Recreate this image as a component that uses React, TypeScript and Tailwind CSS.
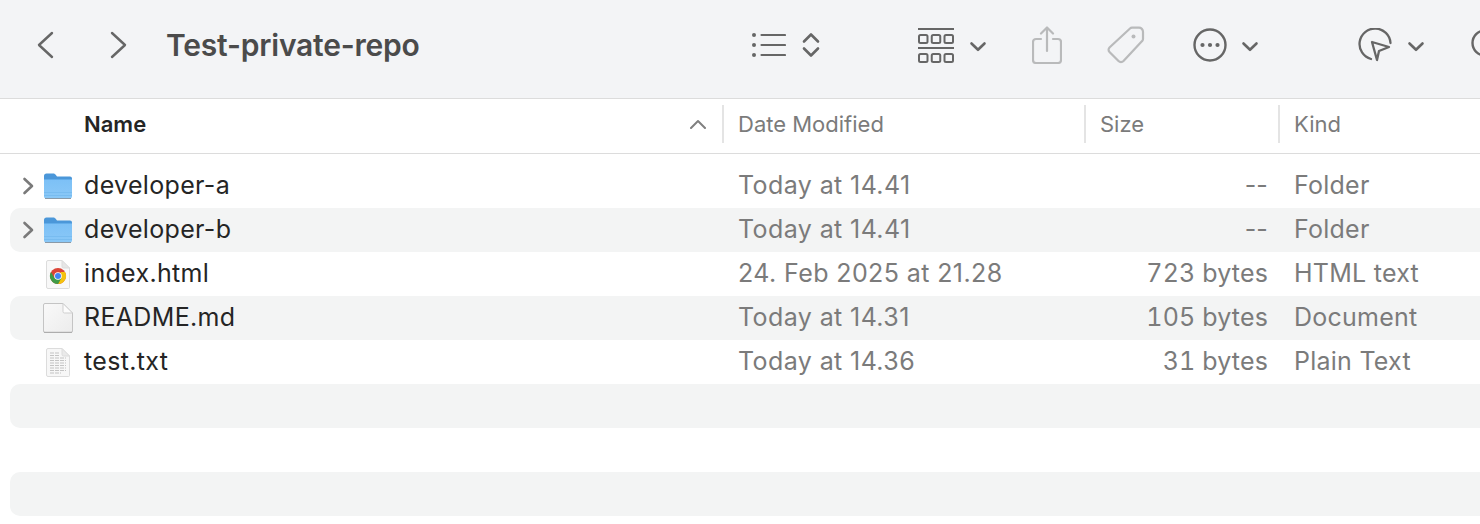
const font = "font-['Inter','Liberation_Sans',sans-serif]";

type Row = {
    name: string;
    date: string;
    size: string;
    kind: string;
    icon: 'folder' | 'chrome' | 'blank' | 'text';
};

const rows: Row[] = [
    { name: 'developer-a', date: 'Today at 14.41', size: '--', kind: 'Folder', icon: 'folder' },
    { name: 'developer-b', date: 'Today at 14.41', size: '--', kind: 'Folder', icon: 'folder' },
    { name: 'index.html', date: '24. Feb 2025 at 21.28', size: '723 bytes', kind: 'HTML text', icon: 'chrome' },
    { name: 'README.md', date: 'Today at 14.31', size: '105 bytes', kind: 'Document', icon: 'blank' },
    { name: 'test.txt', date: 'Today at 14.36', size: '31 bytes', kind: 'Plain Text', icon: 'text' },
];

function NavChevron({ right }: { right?: boolean }) {
    return (
        <svg width="17" height="28" viewBox="0 0 17 28" fill="none" stroke="#666" strokeWidth="2.400" strokeLinecap="round" strokeLinejoin="round" className="shrink-0">
            <path d={right ? 'M2 2l13 12L2 26' : 'M15 2 2 14l13 12'} />
        </svg>
    );
}

function SmallChevron() {
    return (
        <svg width="18" height="12" viewBox="0 0 18 12" fill="none" stroke="#666" strokeWidth="2.600" strokeLinecap="round" strokeLinejoin="round" className="mt-[3px]">
            <path d="M2.500 2.500 9 8.800l6.500-6.300" />
        </svg>
    );
}

function ListIcon() {
    return (
        <svg width="34" height="26" viewBox="0 0 34 26" fill="none" stroke="#666" strokeWidth="2.200" strokeLinecap="round">
            <circle cx="2" cy="3" r="2" fill="#666" stroke="none" />
            <circle cx="2" cy="13" r="2" fill="#666" stroke="none" />
            <circle cx="2" cy="23" r="2" fill="#666" stroke="none" />
            <path d="M9.500 3H33M9.500 13H33M9.500 23H33" />
        </svg>
    );
}

function SortArrows() {
    return (
        <svg width="18" height="26" viewBox="0 0 18 26" fill="none" stroke="#666" strokeWidth="2.600" strokeLinecap="round" strokeLinejoin="round">
            <path d="M2 9.500 9 2.500l7 7M2 16.500l7 7 7-7" />
        </svg>
    );
}

function GalleryIcon() {
    return (
        <svg width="36" height="35" viewBox="0 0 36 35" fill="none" stroke="#666" strokeWidth="2">
            <path d="M0 1h36M0 20h36" />
            <rect x="1" y="7" width="8.500" height="8" rx="1.500" />
            <rect x="13.750" y="7" width="8.500" height="8" rx="1.500" />
            <rect x="26.500" y="7" width="8.500" height="8" rx="1.500" />
            <rect x="1" y="26" width="8.500" height="8" rx="1.500" />
            <rect x="13.750" y="26" width="8.500" height="8" rx="1.500" />
            <rect x="26.500" y="26" width="8.500" height="8" rx="1.500" />
        </svg>
    );
}

function ShareIcon() {
    return (
        <svg width="30" height="38" viewBox="0 0 30 38" fill="none" stroke="#b9babb" strokeWidth="2.200" strokeLinecap="round" strokeLinejoin="round">
            <path d="M9 13H4a3 3 0 0 0-3 3v18a3 3 0 0 0 3 3h22a3 3 0 0 0 3-3V16a3 3 0 0 0-3-3h-5" />
            <path d="M15 25V2M9 7.500 15 1.500l6 6" />
        </svg>
    );
}

function TagIcon() {
    return (
        <svg width="38" height="38" viewBox="0 0 38 38" fill="none" stroke="#b9babb" strokeWidth="2.200" strokeLinejoin="round">
            <path d="M2.500 21.500 23 2.500a3 3 0 0 1 2-.8h7a4 4 0 0 1 4 4V13a3 3 0 0 1-.9 2.100L16.500 35a3.500 3.500 0 0 1-5 0l-9-9a3.200 3.200 0 0 1 0-4.500Z" />
            <circle cx="26.500" cy="10.500" r="2" fill="#b9babb" stroke="none" />
        </svg>
    );
}

function MoreIcon() {
    return (
        <svg width="34" height="34" viewBox="0 0 34 34" fill="none" stroke="#666" strokeWidth="2.400">
            <circle cx="17" cy="17" r="15.500" />
            <circle cx="9.500" cy="17" r="2.100" fill="#666" stroke="none" />
            <circle cx="17" cy="17" r="2.100" fill="#666" stroke="none" />
            <circle cx="24.500" cy="17" r="2.100" fill="#666" stroke="none" />
        </svg>
    );
}

function MarkupIcon() {
    return (
        <svg width="34" height="34" viewBox="0 0 34 34" fill="none" stroke="#666" strokeWidth="2.300" strokeLinejoin="round" strokeLinecap="round">
            <path d="M32.500 15A15.500 15.500 0 1 0 13 31" />
            <path d="M14 14 31 19l-10 4-2 9Z" />
        </svg>
    );
}

function SearchPeek() {
    return (
        <svg width="9" height="34" viewBox="0 0 9 34" fill="none" stroke="#666" strokeWidth="2.400">
            <circle cx="14" cy="15" r="12.500" />
        </svg>
    );
}

function FolderIcon() {
    return (
        <svg width="28" height="26" viewBox="0 0 28 26" className="block">
            <defs>
                <linearGradient id="folderBody" x1="0" y1="0" x2="0" y2="1">
                    <stop offset="0" stopColor="#7cc0f6" />
                    <stop offset="1" stopColor="#8ac8f7" />
                </linearGradient>
            </defs>
            <path d="M0 3A2.500 2.500 0 0 1 2.500.5h6.800c1 0 1.500.4 2.200 1.100L13 3.500h13A2 2 0 0 1 28 5.500v4H0Z" fill="#4b97d9" />
            <path d="M0 6h28v17.500a2 2 0 0 1-2 2H2a2 2 0 0 1-2-2Z" fill="url(#folderBody)" />
            <path d="M0 6.500h28" stroke="#62adea" strokeWidth="1" />
            <path d="M0 19.500h28M0 22.500h28" stroke="#78bcf0" strokeWidth="1" />
            <path d="M1 25.500h26" stroke="#8a9aa8" strokeWidth="1" />
        </svg>
    );
}

function ChromeIcon() {
    return (
        <svg width="24" height="29" viewBox="0 0 24 29" className="block">
            <path d="M.5 2A1.500 1.500 0 0 1 2 .5h14l7.500 7.500v19.500a1 1 0 0 1-1 1H2A1.500 1.500 0 0 1 .5 27Z" fill="#f8f8f8" stroke="#dcdcdc" />
            <path d="M16 .5V6.500A1.500 1.500 0 0 0 17.500 8h6Z" fill="#e6e6e6" stroke="#dcdcdc" />
            <circle cx="12" cy="16" r="8" fill="#db4437" />
            <path d="M19 12a8 8 0 0 1-7 12l3.500-8-1-4Z" fill="#f4c20d" />
            <path d="M5 12a8 8 0 0 0 7 12l3.500-6H8.500Z" fill="#3f9b46" />
            <circle cx="12" cy="16" r="3.800" fill="#fff" />
            <circle cx="12" cy="16" r="3" fill="#4285f4" />
        </svg>
    );
}

function BlankIcon() {
    return (
        <svg width="30" height="30" viewBox="0 0 30 30" className="block">
            <defs>
                <linearGradient id="blankPage" x1="0" y1="0" x2="1" y2="1">
                    <stop offset="0" stopColor="#f9f9f9" />
                    <stop offset="1" stopColor="#ececec" />
                </linearGradient>
            </defs>
            <path d="M.5 2A1.500 1.500 0 0 1 2 .5h18L29.500 10v18a1.500 1.500 0 0 1-1.500 1.500H2A1.500 1.500 0 0 1 .5 28Z" fill="url(#blankPage)" stroke="#c4c4c4" />
            <path d="M20 .5V8.500A1.500 1.500 0 0 0 21.500 10h8Z" fill="#fcfcfc" stroke="#cfcfcf" />
            <path d="M1 29.300h28" stroke="#a8a8a8" strokeWidth="1" />
        </svg>
    );
}

function TextFileIcon() {
    return (
        <svg width="24" height="29" viewBox="0 0 24 29" className="block">
            <path d="M.5 2A1.500 1.500 0 0 1 2 .5h14l7.500 7.500v19.500a1 1 0 0 1-1 1H2A1.500 1.500 0 0 1 .5 27Z" fill="#f7f7f7" stroke="#dcdcdc" />
            <path d="M16 .5V6.500A1.500 1.500 0 0 0 17.500 8h6Z" fill="#eaeaea" stroke="#dcdcdc" />
            <path d="M4 5h10M4 7.500h10M4 10h16M4 12.500h16M4 15h16M4 17.500h16M4 20h16M4 22.500h16M4 25h11" stroke="#c4c4c4" strokeWidth="1.200" strokeDasharray="4 1" />
        </svg>
    );
}

function RowIcon({ icon }: { icon: Row['icon'] }) {
    if (icon === 'folder') return <FolderIcon />;
    if (icon === 'chrome') return <ChromeIcon />;
    if (icon === 'blank') return <BlankIcon />;
    return <TextFileIcon />;
}

function Toolbar() {
    return (
        <div className="flex h-[98px] shrink-0 items-center overflow-hidden bg-[#f3f4f6] pb-[8px] pl-[37px] text-[#4b4b4b]">
            <NavChevron />
            <div className="ml-[56px]">
                <NavChevron right />
            </div>
            <div className="ml-[39px] w-[252px] shrink-0 text-[30px] leading-none font-semibold tracking-[-0.2px] whitespace-nowrap">
                Test-private-repo
            </div>
            <div className="ml-[334px] flex shrink-0 items-center">
                <ListIcon />
                <div className="ml-[16px]">
                    <SortArrows />
                </div>
            </div>
            <div className="ml-[98px] flex shrink-0 items-center">
                <GalleryIcon />
                <div className="ml-[15px]">
                    <SmallChevron />
                </div>
            </div>
            <div className="ml-[45px] shrink-0">
                <ShareIcon />
            </div>
            <div className="ml-[45px] shrink-0">
                <TagIcon />
            </div>
            <div className="ml-[48px] flex shrink-0 items-center">
                <MoreIcon />
                <div className="ml-[14px]">
                    <SmallChevron />
                </div>
            </div>
            <div className="ml-[99px] flex shrink-0 items-center">
                <MarkupIcon />
                <div className="ml-[15px]">
                    <SmallChevron />
                </div>
            </div>
            <div className="ml-[46px] shrink-0">
                <SearchPeek />
            </div>
        </div>
    );
}

function TableHeader() {
    return (
        <div className="flex h-[56px] shrink-0 items-center border-y border-[#dcdcdc] bg-white pb-[4px] text-[22px]">
            <div className="flex w-[722px] shrink-0 items-center pr-[15px] pl-[84px]">
                <span className="font-semibold text-[#252525]">Name</span>
                <svg width="18" height="10" viewBox="0 0 18 10" fill="none" stroke="#808080" strokeWidth="2" strokeLinecap="round" strokeLinejoin="round" className="ml-auto">
                    <path d="M2 9 9 2l7 7" />
                </svg>
            </div>
            <div className="h-[38px] w-[362px] shrink-0 border-l-2 border-[#e4e4e4] pl-[14px] leading-[38px] text-[#7b7b7b]">
                Date Modified
            </div>
            <div className="h-[38px] w-[194px] shrink-0 border-l-2 border-[#e4e4e4] pl-[14px] leading-[38px] text-[#7b7b7b]">
                Size
            </div>
            <div className="h-[38px] flex-1 border-l-2 border-[#e4e4e4] pl-[14px] leading-[38px] text-[#7b7b7b]">
                Kind
            </div>
        </div>
    );
}

export default function App() {
    return (
        <div className={`flex h-[524px] w-[1480px] flex-col overflow-hidden bg-white ${font}`}>
            <Toolbar />
            <TableHeader />
            <div className="flex flex-col pt-[10px] pl-[10px] text-[25px]">
                {rows.map((row, i) => (
                    <div
                        key={row.name}
                        className={`flex h-[44px] items-center rounded-l-[10px] ${i % 2 === 1 ? 'bg-[#f3f4f4]' : ''}`}
                    >
                        <div className="w-[33px] shrink-0 pl-[12px]">
                            {row.icon === 'folder' && (
                                <svg width="12" height="18" viewBox="0 0 12 18" fill="none" stroke="#7a7a7a" strokeWidth="2.600" strokeLinecap="round" strokeLinejoin="round">
                                    <path d="M2.500 2 10 9l-7.500 7" />
                                </svg>
                            )}
                        </div>
                        <div className="flex w-[30px] shrink-0 justify-center">
                            <RowIcon icon={row.icon} />
                        </div>
                        <div className="ml-[11px] w-[654px] shrink-0 tracking-[0.33px] text-[#252525]">{row.name}</div>
                        <div className="w-[398px] shrink-0 tracking-[0.4px] text-[#7b7b7b]">{row.date}</div>
                        <div className={`w-[132px] shrink-0 text-right tracking-[0.15px] text-[#7b7b7b] ${row.size === '--' ? '' : 'tabular-nums'}`}>
                            {row.size}
                        </div>
                        <div className="ml-[26px] tracking-[0.25px] text-[#7b7b7b]">{row.kind}</div>
                    </div>
                ))}
                <div className="h-[44px] rounded-l-[10px] bg-[#f3f4f4]" />
                <div className="h-[44px]" />
                <div className="h-[44px] rounded-l-[10px] bg-[#f3f4f4]" />
            </div>
        </div>
    );
}
